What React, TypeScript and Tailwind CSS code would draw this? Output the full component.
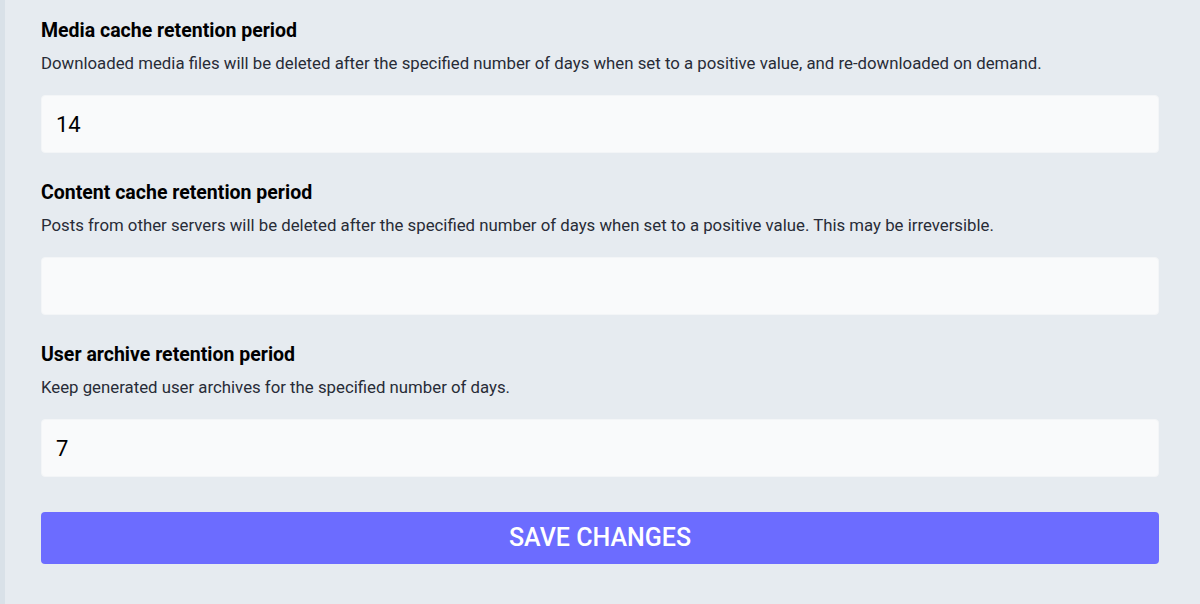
import React from 'react';

type Field = {
  id: string;
  label: string;
  hint: string;
  value: string;
};

const fields: Field[] = [
  {
    id: 'media',
    label: 'Media cache retention period',
    hint: 'Downloaded media files will be deleted after the specified number of days when set to a positive value, and re-downloaded on demand.',
    value: '14',
  },
  {
    id: 'content',
    label: 'Content cache retention period',
    hint: 'Posts from other servers will be deleted after the specified number of days when set to a positive value. This may be irreversible.',
    value: '',
  },
  {
    id: 'archive',
    label: 'User archive retention period',
    hint: 'Keep generated user archives for the specified number of days.',
    value: '7',
  },
];

export default function App() {
  return (
    <div className="flex min-h-[604px] w-[1200px] bg-[#e6ebf0] font-['Roboto',sans-serif]">
      <div className="w-[5px] shrink-0 bg-[#d9e1e8]" />
      <div className="flex-1 pl-[36px] pr-[41px] pt-[20px]">
        {fields.map((f) => (
          <div key={f.id} className="mb-[29px]">
            <label className="block text-[19.5px] leading-[22px] font-bold text-black">
              {f.label}
            </label>
            <p className="mt-[9px] text-[16.8px] leading-[24px] text-[#282c37]">{f.hint}</p>
            <input
              type="text"
              defaultValue={f.value}
              className="mt-[20px] block h-[58px] w-full rounded-[4px] border border-[#f3f5f7] bg-[#f9fafb] px-[14px] text-[22px] text-black outline-none"
            />
          </div>
        ))}
        <button className="mt-[35px] flex h-[52px] w-full items-center justify-center rounded-[4px] bg-[#6c6cff] text-[25px] font-medium uppercase text-white">
          Save changes
        </button>
      </div>
    </div>
  );
}
